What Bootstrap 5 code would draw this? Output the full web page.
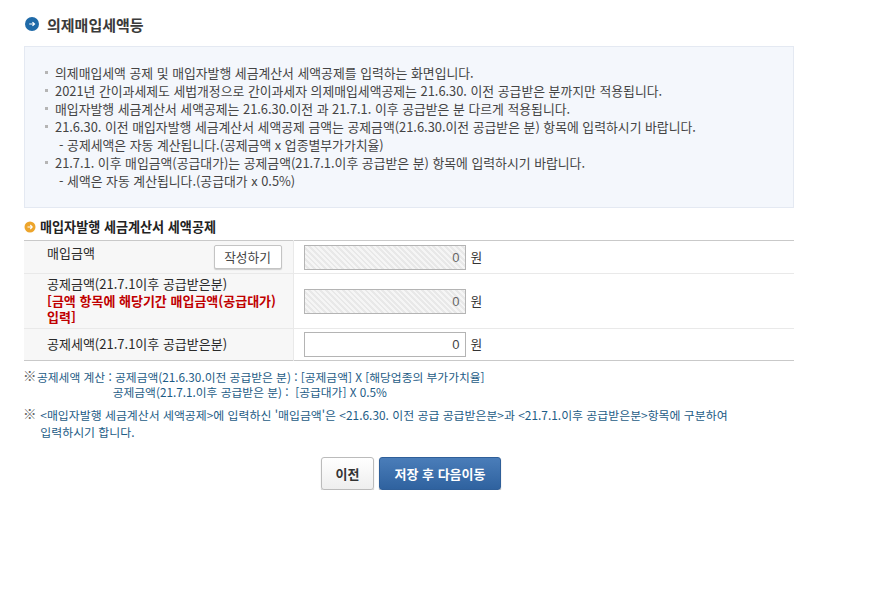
<!doctype html>
<html lang="ko"><head><meta charset="utf-8">
<link href="https://cdn.jsdelivr.net/npm/bootstrap@5.3.0/dist/css/bootstrap.min.css" rel="stylesheet">
<style>
body{font-family:"Noto Sans CJK KR","Noto Sans",sans-serif;font-size:12.8px;color:#333;background:#fff;margin:0}
.wrap{width:770px;margin-left:24px;padding-top:15px}
.page-title{font-size:15px;font-weight:700;line-height:20px;height:31px;margin:0;color:#3a3a3a;gap:8px}
.title-ico{margin:2px 0 0 1px}
.info-box{height:162px;background:#f4f7fc;border:1px solid #e4e9f2;padding:17px 20px 0 20px;line-height:18px;color:#444;font-size:12.85px}
.info-box ul{list-style:none;margin:0;padding:0}
.info-box li{position:relative;padding-left:10px;white-space:nowrap}
.info-box li.lst:before{content:"";position:absolute;left:0;top:7px;width:3px;height:3px;background:#b5b5b5}
.info-box li.sub{padding-left:14px}
.sec-title{font-size:13.1px;font-weight:700;line-height:16px;margin:11px 0 5px;gap:4px;color:#222}
.form-tbl{width:770px;margin:0;border-top:1px solid #c9c9c9;border-bottom:1px solid #c9c9c9;table-layout:fixed;line-height:16.5px}
.form-tbl th{width:269px;background:#f7f7f7;font-weight:400;padding:0 11px 0 23px;border-bottom:1px solid #e9e9e9;border-right:1px solid #e9e9e9;color:#2a2a2a;vertical-align:middle;font-size:13px}
.form-tbl td{padding:0 0 0 10px;border-bottom:1px solid #e9e9e9;vertical-align:middle;background:#fff;font-size:12.7px}
.form-tbl tr:last-child th,.form-tbl tr:last-child td{border-bottom:0}
.r1{height:33px}.r2{height:55px}.r3{height:32px}
.lbl-top{padding-bottom:7px;display:block}
.warn{color:#c00000;font-weight:700;display:block;padding-right:4px}
.amt{width:162px;height:25px;border:1px solid #b4b4b4;text-align:right;padding:0 5px;font-size:13px;color:#444;font-family:"Liberation Sans",sans-serif;border-radius:0;background:#fff;display:block}
.amt.off{background:repeating-linear-gradient(45deg,#f5f5f5 0 2px,#e8e8e8 2px 4px);color:#666}
.gap-won{gap:5px}
.btn-write{width:68px;height:24px;padding:0;font-size:12.7px;line-height:22px;border:1px solid #c4c4c4;border-radius:2px;background:#fff;color:#444;box-shadow:0 1px 1px #ccc}
.note{color:#1d5c86;font-size:11.9px;position:relative;padding-left:13px;margin:0;white-space:pre}
.note-a{line-height:15px;margin-top:8px;font-size:11.75px}
.note-b{line-height:17px;margin-top:7px}
.note-mark{position:absolute;left:-1px;top:-1px;color:#666;font-size:13.5px;font-weight:300}
.act-row{margin-top:17px;padding-left:4px;gap:5px}
.act-btn{height:33px;font-size:13px;font-weight:700;padding:0;border-radius:3px;line-height:31px}
.act-prev{width:53px;background:linear-gradient(#fff,#eee);border:1px solid #bbb;color:#333;box-shadow:0 1px 1px #bbb}
.act-next{width:122px;background:linear-gradient(#4a7db9,#2f629f);border:1px solid #2f5f99;color:#fff;box-shadow:0 1px 1px #999}
</style></head><body>
<div class="wrap">
<h1 class="page-title d-flex align-items-start">
<svg class="title-ico" width="14" height="14" viewBox="0 0 15 15"><circle cx="7.5" cy="7.5" r="7.5" fill="#1f6aa8"/><path d="M4.5 7.5H10M8 5.5l2.2 2-2.2 2" fill="none" stroke="#fff" stroke-width="1.3"/></svg>
<span>의제매입세액등</span></h1>
<div class="info-box"><ul>
<li class="lst">의제매입세액 공제 및 매입자발행 세금계산서 세액공제를 입력하는 화면입니다.</li>
<li class="lst">2021년 간이과세제도 세법개정으로 간이과세자 의제매입세액공제는 21.6.30. 이전 공급받은 분까지만 적용됩니다.</li>
<li class="lst">매입자발행 세금계산서 세액공제는 21.6.30.이전 과 21.7.1. 이후 공급받은 분 다르게 적용됩니다.</li>
<li class="lst">21.6.30. 이전 매입자발행 세금계산서 세액공제 금액는 공제금액(21.6.30.이전 공급받은 분) 항목에 입력하시기 바랍니다.</li>
<li class="sub">- 공제세액은 자동 계산됩니다.(공제금액 x 업종별부가가치율)</li>
<li class="lst">21.7.1. 이후 매입금액(공급대가)는 공제금액(21.7.1.이후 공급받은 분) 항목에 입력하시기 바랍니다.</li>
<li class="sub">- 세액은 자동 계산됩니다.(공급대가 x 0.5%)</li>
</ul></div>
<h2 class="sec-title d-flex align-items-center">
<svg width="12" height="12" viewBox="0 0 12 12"><circle cx="6" cy="6" r="5.5" fill="#eda52c"/><path d="M3.5 6H8M6.3 4l1.9 2-1.9 2" fill="none" stroke="#fff" stroke-width="1.1"/></svg>
<span>매입자발행 세금계산서 세액공제</span></h2>
<table class="form-tbl">
<tr class="r1"><th><div class="d-flex justify-content-between"><span class="lbl-top">매입금액</span><button type="button" class="btn btn-write">작성하기</button></div></th>
<td><div class="d-flex align-items-center gap-won"><input class="amt off" value="0" readonly><span>원</span></div></td></tr>
<tr class="r2"><th>공제금액(21.7.1이후 공급받은분)<br><span class="warn">[금액 항목에 해당기간 매입금액(공급대가)<br>입력]</span></th>
<td><div class="d-flex align-items-center gap-won"><input class="amt off" value="0" readonly><span>원</span></div></td></tr>
<tr class="r3"><th>공제세액(21.7.1이후 공급받은분)</th>
<td><div class="d-flex align-items-center gap-won"><input class="amt" value="0"><span>원</span></div></td></tr>
</table>
<p class="note note-a"><span class="note-mark">※</span>공제세액 계산 : 공제금액(21.6.30.이전 공급받은 분) : [공제금액] X [해당업종의 부가가치율]
                       공제금액(21.7.1.이후 공급받은 분) :  [공급대가] X 0.5%</p>
<p class="note note-b"><span class="note-mark">※</span> &lt;매입자발행 세금계산서 세액공제&gt;에 입력하신 '매입금액'은 &lt;21.6.30. 이전 공급 공급받은분&gt;과 &lt;21.7.1.이후 공급받은분&gt;항목에 구분하여
 입력하시기 합니다.</p>
<div class="d-flex justify-content-center act-row">
<button type="button" class="btn act-btn act-prev">이전</button>
<button type="button" class="btn act-btn act-next">저장 후 다음이동</button>
</div>
</div>
<script src="https://cdn.jsdelivr.net/npm/bootstrap@5.3.0/dist/js/bootstrap.bundle.min.js"></script>
</body></html>
